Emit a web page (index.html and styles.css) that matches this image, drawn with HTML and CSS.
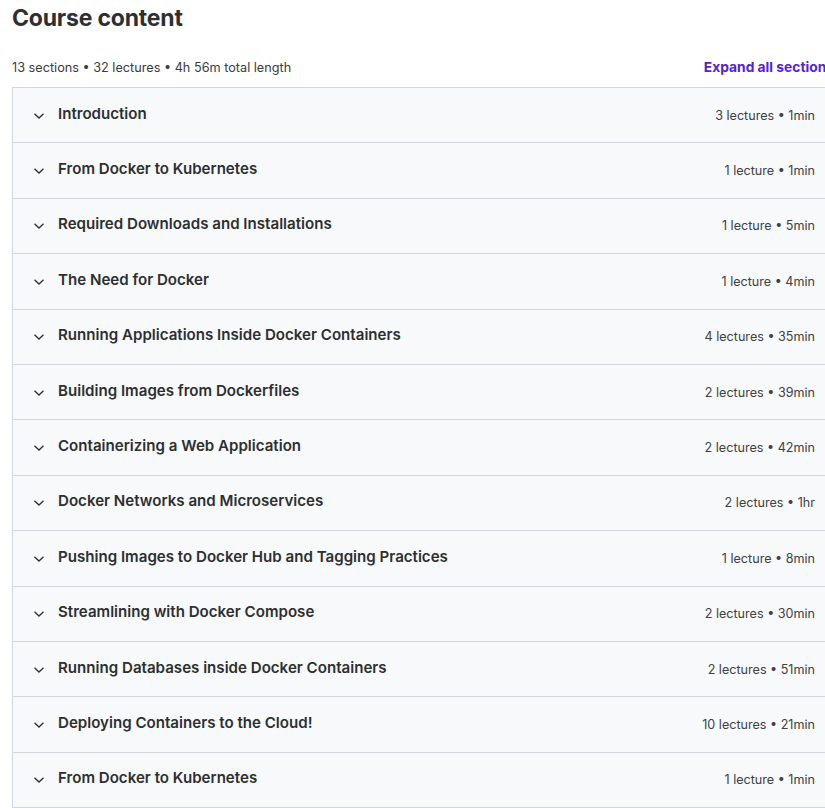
FILE: index.html
```html
<!DOCTYPE html>
<html>
<head>
<meta charset="utf-8">
<link rel="stylesheet" href="styles.css">
</head>
<body>
<div class="page">
  <h2 class="title">Course content</h2>
  <div class="meta">
    <span class="summary">13 sections • 32 lectures • 4h 56m total length</span>
    <span class="expand">Expand all sections</span>
  </div>
  <div class="sections">
    <div class="row"><span class="chev"><svg viewBox="0 0 12 8" width="12" height="8"><path d="M1.5 1.8 L6 6 L10.5 1.8" fill="none" stroke="#2d2f31" stroke-width="1.3"/></svg></span><span class="name">Introduction</span><span class="info">3 lectures • 1min</span></div>
    <div class="row"><span class="chev"><svg viewBox="0 0 12 8" width="12" height="8"><path d="M1.5 1.8 L6 6 L10.5 1.8" fill="none" stroke="#2d2f31" stroke-width="1.3"/></svg></span><span class="name">From Docker to Kubernetes</span><span class="info">1 lecture • 1min</span></div>
    <div class="row"><span class="chev"><svg viewBox="0 0 12 8" width="12" height="8"><path d="M1.5 1.8 L6 6 L10.5 1.8" fill="none" stroke="#2d2f31" stroke-width="1.3"/></svg></span><span class="name">Required Downloads and Installations</span><span class="info">1 lecture • 5min</span></div>
    <div class="row"><span class="chev"><svg viewBox="0 0 12 8" width="12" height="8"><path d="M1.5 1.8 L6 6 L10.5 1.8" fill="none" stroke="#2d2f31" stroke-width="1.3"/></svg></span><span class="name">The Need for Docker</span><span class="info">1 lecture • 4min</span></div>
    <div class="row"><span class="chev"><svg viewBox="0 0 12 8" width="12" height="8"><path d="M1.5 1.8 L6 6 L10.5 1.8" fill="none" stroke="#2d2f31" stroke-width="1.3"/></svg></span><span class="name">Running Applications Inside Docker Containers</span><span class="info">4 lectures • 35min</span></div>
    <div class="row"><span class="chev"><svg viewBox="0 0 12 8" width="12" height="8"><path d="M1.5 1.8 L6 6 L10.5 1.8" fill="none" stroke="#2d2f31" stroke-width="1.3"/></svg></span><span class="name">Building Images from Dockerfiles</span><span class="info">2 lectures • 39min</span></div>
    <div class="row"><span class="chev"><svg viewBox="0 0 12 8" width="12" height="8"><path d="M1.5 1.8 L6 6 L10.5 1.8" fill="none" stroke="#2d2f31" stroke-width="1.3"/></svg></span><span class="name">Containerizing a Web Application</span><span class="info">2 lectures • 42min</span></div>
    <div class="row"><span class="chev"><svg viewBox="0 0 12 8" width="12" height="8"><path d="M1.5 1.8 L6 6 L10.5 1.8" fill="none" stroke="#2d2f31" stroke-width="1.3"/></svg></span><span class="name">Docker Networks and Microservices</span><span class="info">2 lectures • 1hr</span></div>
    <div class="row"><span class="chev"><svg viewBox="0 0 12 8" width="12" height="8"><path d="M1.5 1.8 L6 6 L10.5 1.8" fill="none" stroke="#2d2f31" stroke-width="1.3"/></svg></span><span class="name">Pushing Images to Docker Hub and Tagging Practices</span><span class="info">1 lecture • 8min</span></div>
    <div class="row"><span class="chev"><svg viewBox="0 0 12 8" width="12" height="8"><path d="M1.5 1.8 L6 6 L10.5 1.8" fill="none" stroke="#2d2f31" stroke-width="1.3"/></svg></span><span class="name">Streamlining with Docker Compose</span><span class="info">2 lectures • 30min</span></div>
    <div class="row"><span class="chev"><svg viewBox="0 0 12 8" width="12" height="8"><path d="M1.5 1.8 L6 6 L10.5 1.8" fill="none" stroke="#2d2f31" stroke-width="1.3"/></svg></span><span class="name">Running Databases inside Docker Containers</span><span class="info">2 lectures • 51min</span></div>
    <div class="row"><span class="chev"><svg viewBox="0 0 12 8" width="12" height="8"><path d="M1.5 1.8 L6 6 L10.5 1.8" fill="none" stroke="#2d2f31" stroke-width="1.3"/></svg></span><span class="name">Deploying Containers to the Cloud!</span><span class="info">10 lectures • 21min</span></div>
    <div class="row"><span class="chev"><svg viewBox="0 0 12 8" width="12" height="8"><path d="M1.5 1.8 L6 6 L10.5 1.8" fill="none" stroke="#2d2f31" stroke-width="1.3"/></svg></span><span class="name">From Docker to Kubernetes</span><span class="info">1 lecture • 1min</span></div>
  </div>
</div>
</body>
</html>
```

FILE: styles.css
```css
html, body {
  margin: 0;
  padding: 0;
  overflow: hidden;
  background: #ffffff;
}
body {
  font-family: Inter, "Noto Sans", sans-serif;
  color: #2d2f31;
}
.page {
  width: 822px;
  padding-left: 12px;
}
.title {
  margin: 0;
  padding-top: 4px;
  font-size: 23px;
  font-weight: 700;
  line-height: 28px;
  letter-spacing: -0.2px;
}
.meta {
  display: flex;
  justify-content: space-between;
  align-items: center;
  margin-top: 27px;
  height: 16px;
  margin-bottom: 12px;
}
.summary {
  font-size: 12.7px;
  color: #3a3c3e;
}
.expand {
  font-size: 13.8px;
  font-weight: 700;
  color: #5624d0;
}
.sections {
  border: 1px solid #d1d7dc;
  border-bottom: none;
  border-right: none;
}
.row {
  display: flex;
  align-items: center;
  height: 54.4px;
  background: #f7f9fa;
  border-bottom: 1px solid #d1d7dc;
  padding-left: 20px;
  padding-right: 19px;
}
.chev {
  display: flex;
  width: 25px;
  margin-top: 1px;
}
.name {
  flex: 1;
  font-size: 15.1px;
  font-weight: 600;
  color: #2d2f31;
  margin-top: -4px;
}
.info {
  font-size: 12.6px;
  color: #3e4143;
}
```
